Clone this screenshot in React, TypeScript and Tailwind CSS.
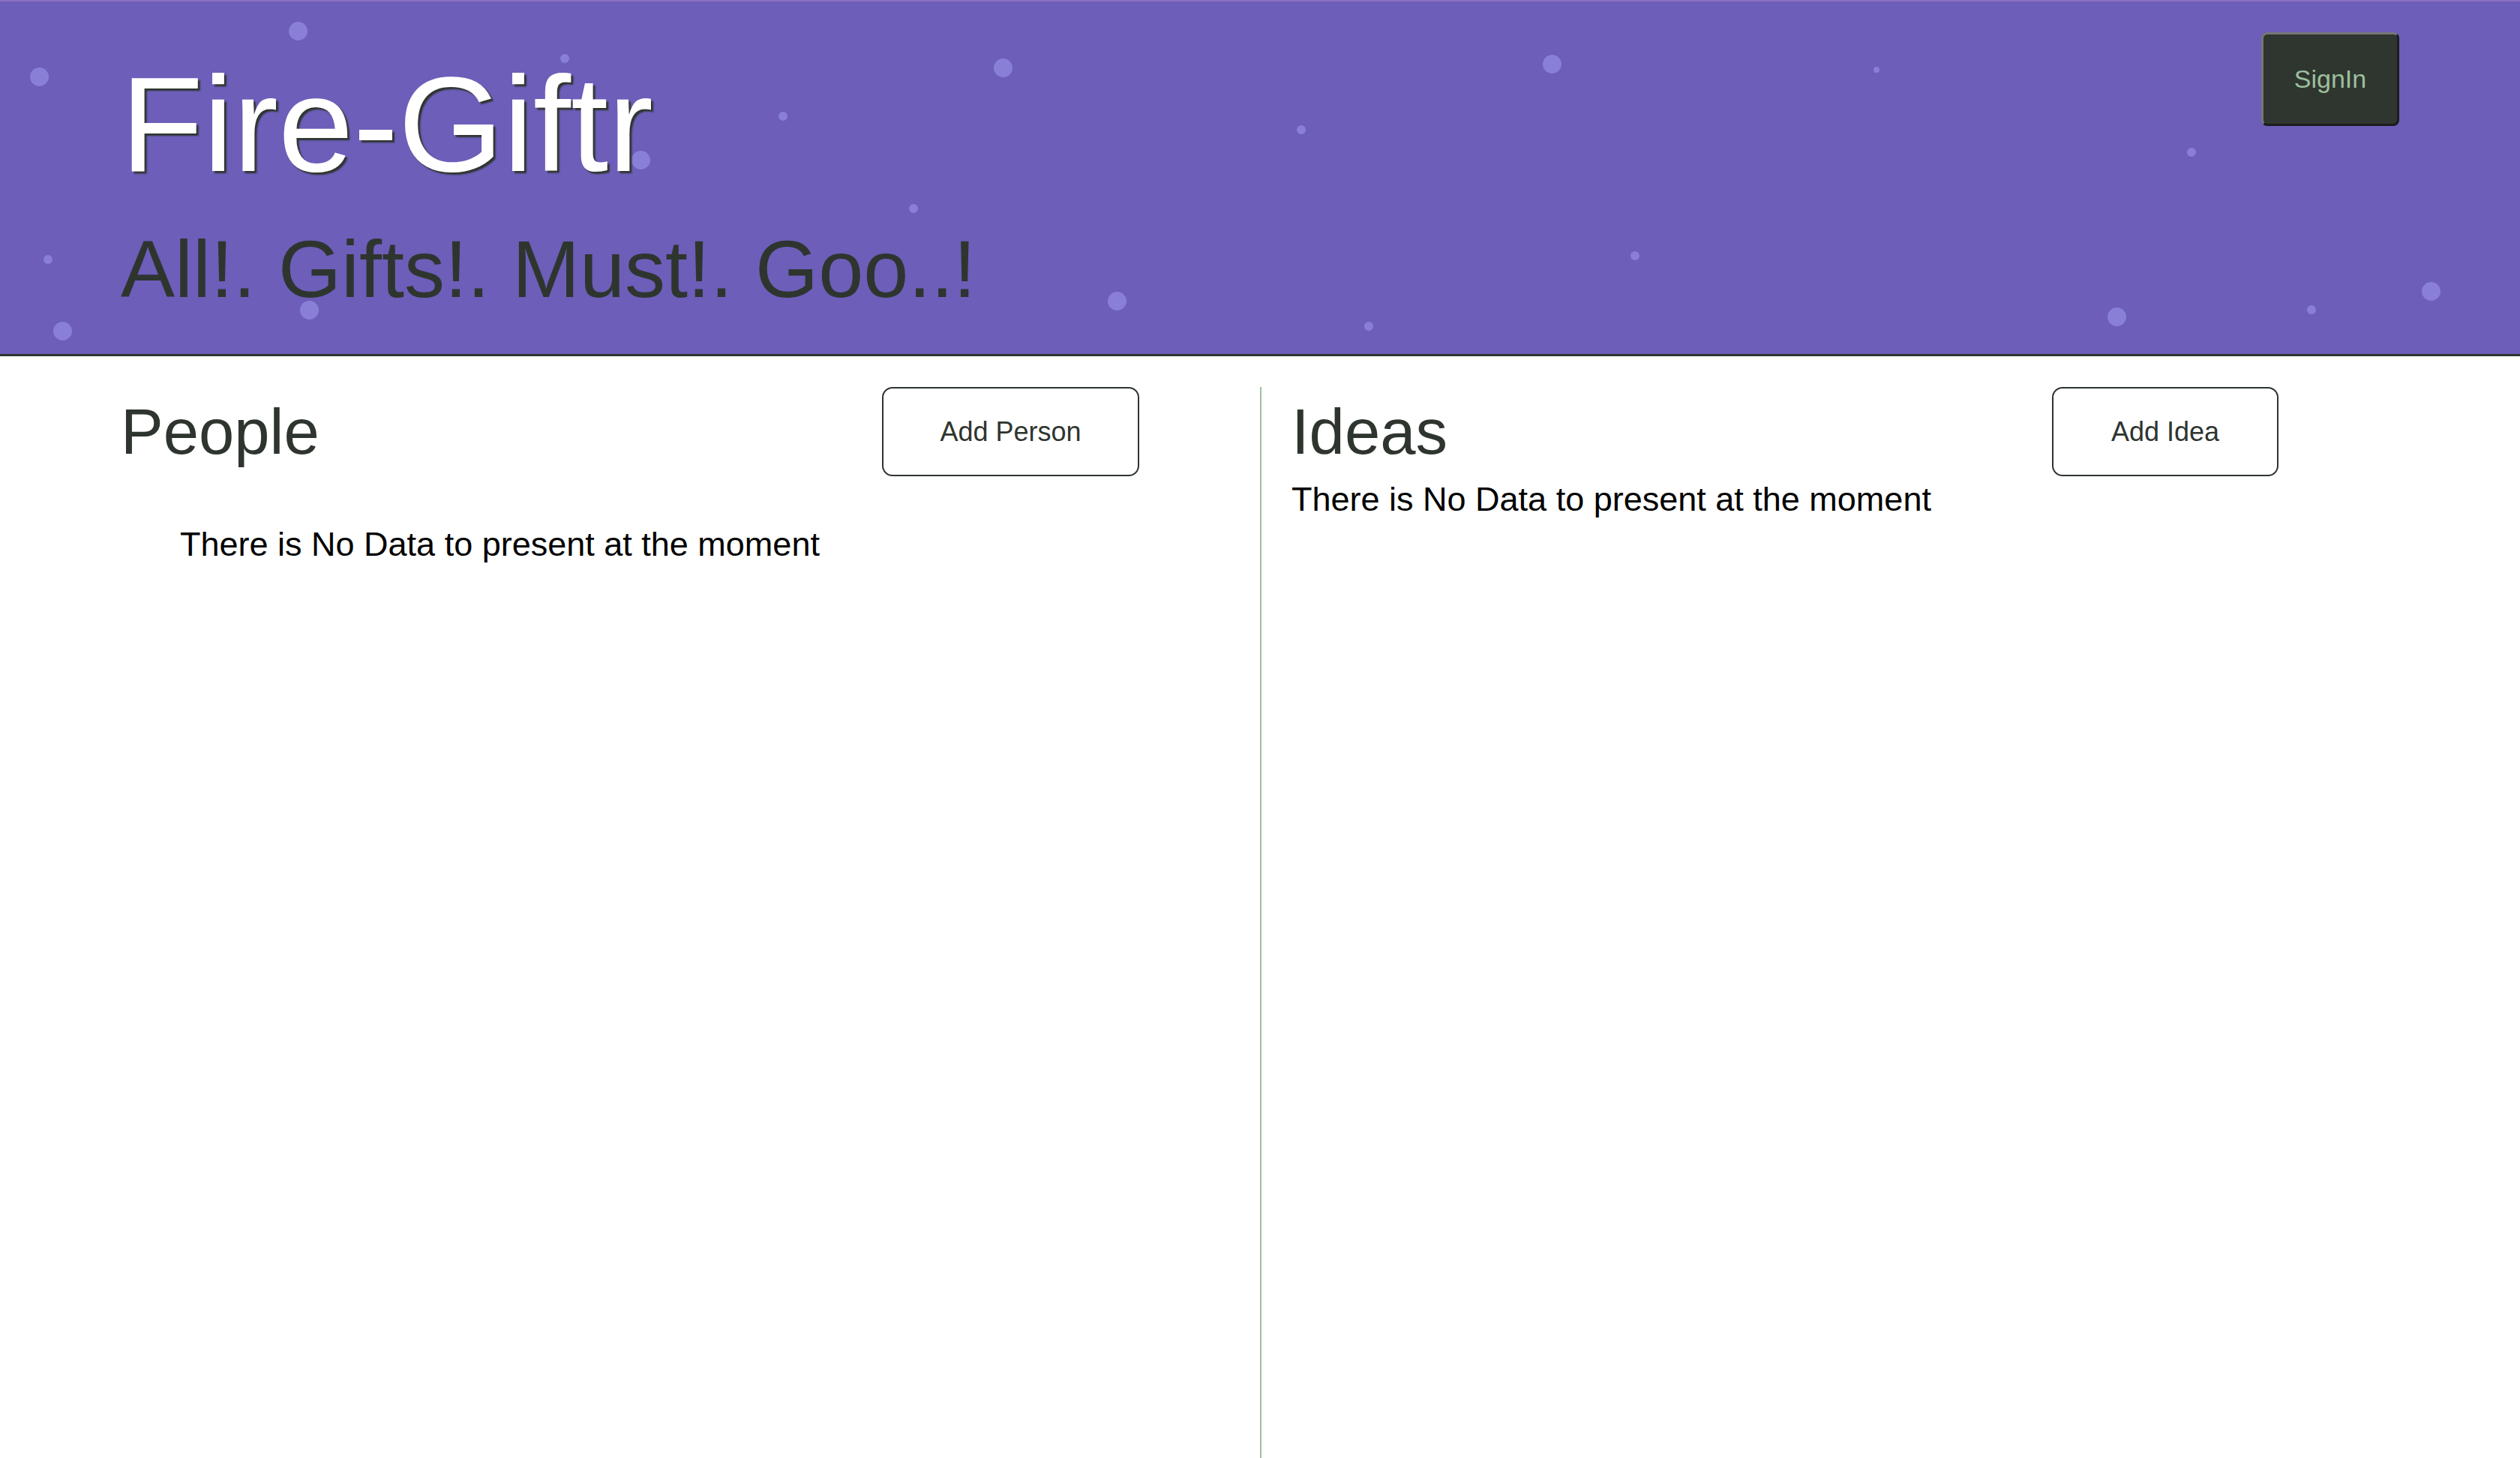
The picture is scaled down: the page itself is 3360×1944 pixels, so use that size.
import React from "react";

const dots: { x: number; y: number; d: number }[] = [
  { x: 52, y: 102, d: 25 },
  { x: 397, y: 41, d: 25 },
  { x: 753, y: 78, d: 12 },
  { x: 64, y: 346, d: 12 },
  { x: 83, y: 441, d: 25 },
  { x: 412, y: 413, d: 25 },
  { x: 854, y: 213, d: 25 },
  { x: 1044, y: 155, d: 12 },
  { x: 1218, y: 278, d: 12 },
  { x: 1337, y: 90, d: 25 },
  { x: 1489, y: 401, d: 25 },
  { x: 1735, y: 173, d: 12 },
  { x: 1825, y: 435, d: 12 },
  { x: 2069, y: 85, d: 25 },
  { x: 2180, y: 341, d: 12 },
  { x: 2502, y: 93, d: 8 },
  { x: 2822, y: 422, d: 25 },
  { x: 2922, y: 203, d: 12 },
  { x: 3082, y: 413, d: 12 },
  { x: 3241, y: 388, d: 25 },
];

export default function App() {
  return (
    <div className="min-h-screen bg-white font-['Liberation_Sans',Arial,sans-serif] flex flex-col">
      <header className="relative h-[475px] shrink-0 bg-[#6c5eb9] border-t-2 border-t-[#8b70be] border-b-[3px] border-b-[#2e352f] flex justify-between overflow-hidden">
        {dots.map((p, i) => (
          <span
            key={i}
            className="absolute rounded-full bg-[#8a7fd7]"
            style={{ left: p.x - p.d / 2, top: p.y - p.d / 2 - 2, width: p.d, height: p.d }}
          />
        ))}
        <div className="relative pl-[161px] pt-[74px]">
          <h1 className="text-[180px] leading-none text-white [text-shadow:3px_3px_2px_#2e352f] whitespace-nowrap">
            Fire-Giftr
          </h1>
          <h2 className="mt-[49px] text-[108px] leading-none text-[#2e352f] whitespace-nowrap">
            All!. Gifts!. Must!. Goo..!
          </h2>
        </div>
        <div className="relative pr-[161px] pt-[41px]">
          <button className="w-[184px] h-[125px] rounded-[8px] bg-[#2e362f] border-[3px] border-t-[#767676] border-l-[#767676] border-r-[#1c1c1c] border-b-[#1c1c1c] text-[34px] text-[#9dbf9e] flex items-center justify-center">
            SignIn
          </button>
        </div>
      </header>

      <main className="flex-1 grid grid-cols-[1680px_1fr] pt-[41px]">
        <section className="pl-[161px] pr-[161px]">
          <div className="flex items-center justify-between">
            <h2 className="text-[85px] leading-none text-[#2e352f]">People</h2>
            <button className="w-[343px] h-[119px] rounded-[14px] border-2 border-[#2e352f] bg-white text-[36px] text-[#2e352f] flex items-center justify-center">
              Add Person
            </button>
          </div>
          <ul className="mt-[68px] pl-[79px]">
            <li className="text-[45px] leading-none text-black whitespace-nowrap">
              There is No Data to present at the moment
            </li>
          </ul>
        </section>
        <section className="border-l-2 border-[#9dbf9e] pl-[40px] pr-[322px]">
          <div className="flex items-center justify-between">
            <h2 className="text-[85px] leading-none text-[#2e352f]">Ideas</h2>
            <button className="w-[302px] h-[119px] rounded-[14px] border-2 border-[#2e352f] bg-white text-[36px] text-[#2e352f] flex items-center justify-center">
              Add Idea
            </button>
          </div>
          <p className="mt-[8px] text-[45px] leading-none text-black whitespace-nowrap">
            There is No Data to present at the moment
          </p>
        </section>
      </main>
    </div>
  );
}
